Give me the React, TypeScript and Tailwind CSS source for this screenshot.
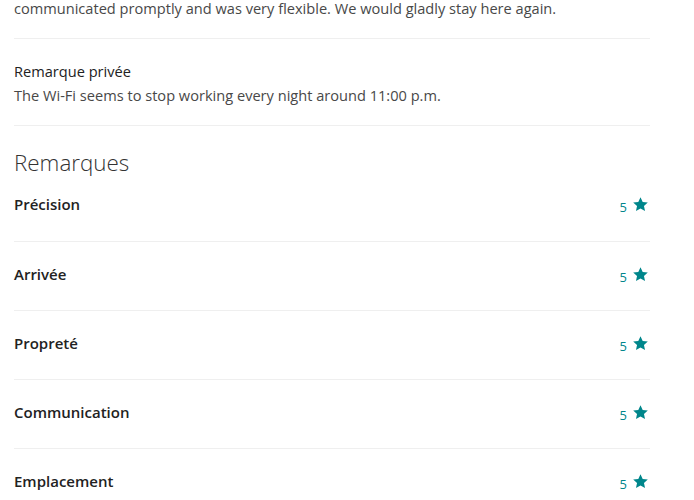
const ratings = ['Précision', 'Arrivée', 'Propreté', 'Communication', 'Emplacement'];

const Star = () => (
    <svg viewBox="0 0 24 24" className="h-[17px] w-[17px]" fill="#00868b">
        <path d="M12 1.8l3.1 6.6 7.2.8-5.4 4.9 1.5 7.1L12 17.6l-6.4 3.6 1.5-7.1-5.4-4.9 7.2-.8z" />
    </svg>
);

const App = () => {
    return (
        <div
            className="h-[500px] w-[694px] overflow-hidden bg-white px-[14px] text-[#484848]"
            style={{ fontFamily: '"Open Sans", Roboto, sans-serif' }}
        >
            <div className="w-[636px]">
                <p className="border-b border-[#efefef] pb-[22px] text-[14.6px] leading-[16px] whitespace-nowrap">
                    communicated promptly and was very flexible. We would gladly stay here again.
                </p>

                <div className="border-b border-[#efefef] pb-[20px] pt-[22px]">
                    <div className="text-[14.6px] leading-[20px] text-[#222]">Remarque privée</div>
                    <p className="mt-[4px] text-[14.6px] leading-[20px]">
                        The Wi-Fi seems to stop working every night around 11:00 p.m.
                    </p>
                </div>

                <h2 className="mt-[23px] text-[22.4px] font-light leading-[28px] text-[#333]">Remarques</h2>

                {ratings.map((label, i) => (
                    <div
                        key={label}
                        className={`border-b border-[#efefef] ${
                            i === 0 ? 'pb-[27px] pt-[17px]' : 'pb-[26px] pt-[22px]'
                        }`}
                    >
                        <div className="flex h-[20px] items-center justify-between">
                            <span className="text-[15px] font-semibold leading-[20px] text-[#222]">{label}</span>
                            <span className="flex h-[20px] items-center gap-[5px] pr-[1px] text-[#00868b]">
                                <span className="translate-y-[3px] text-[13px] leading-[16px]">5</span>
                                <Star />
                            </span>
                        </div>
                    </div>
                ))}
            </div>
        </div>
    );
};

export default App;
